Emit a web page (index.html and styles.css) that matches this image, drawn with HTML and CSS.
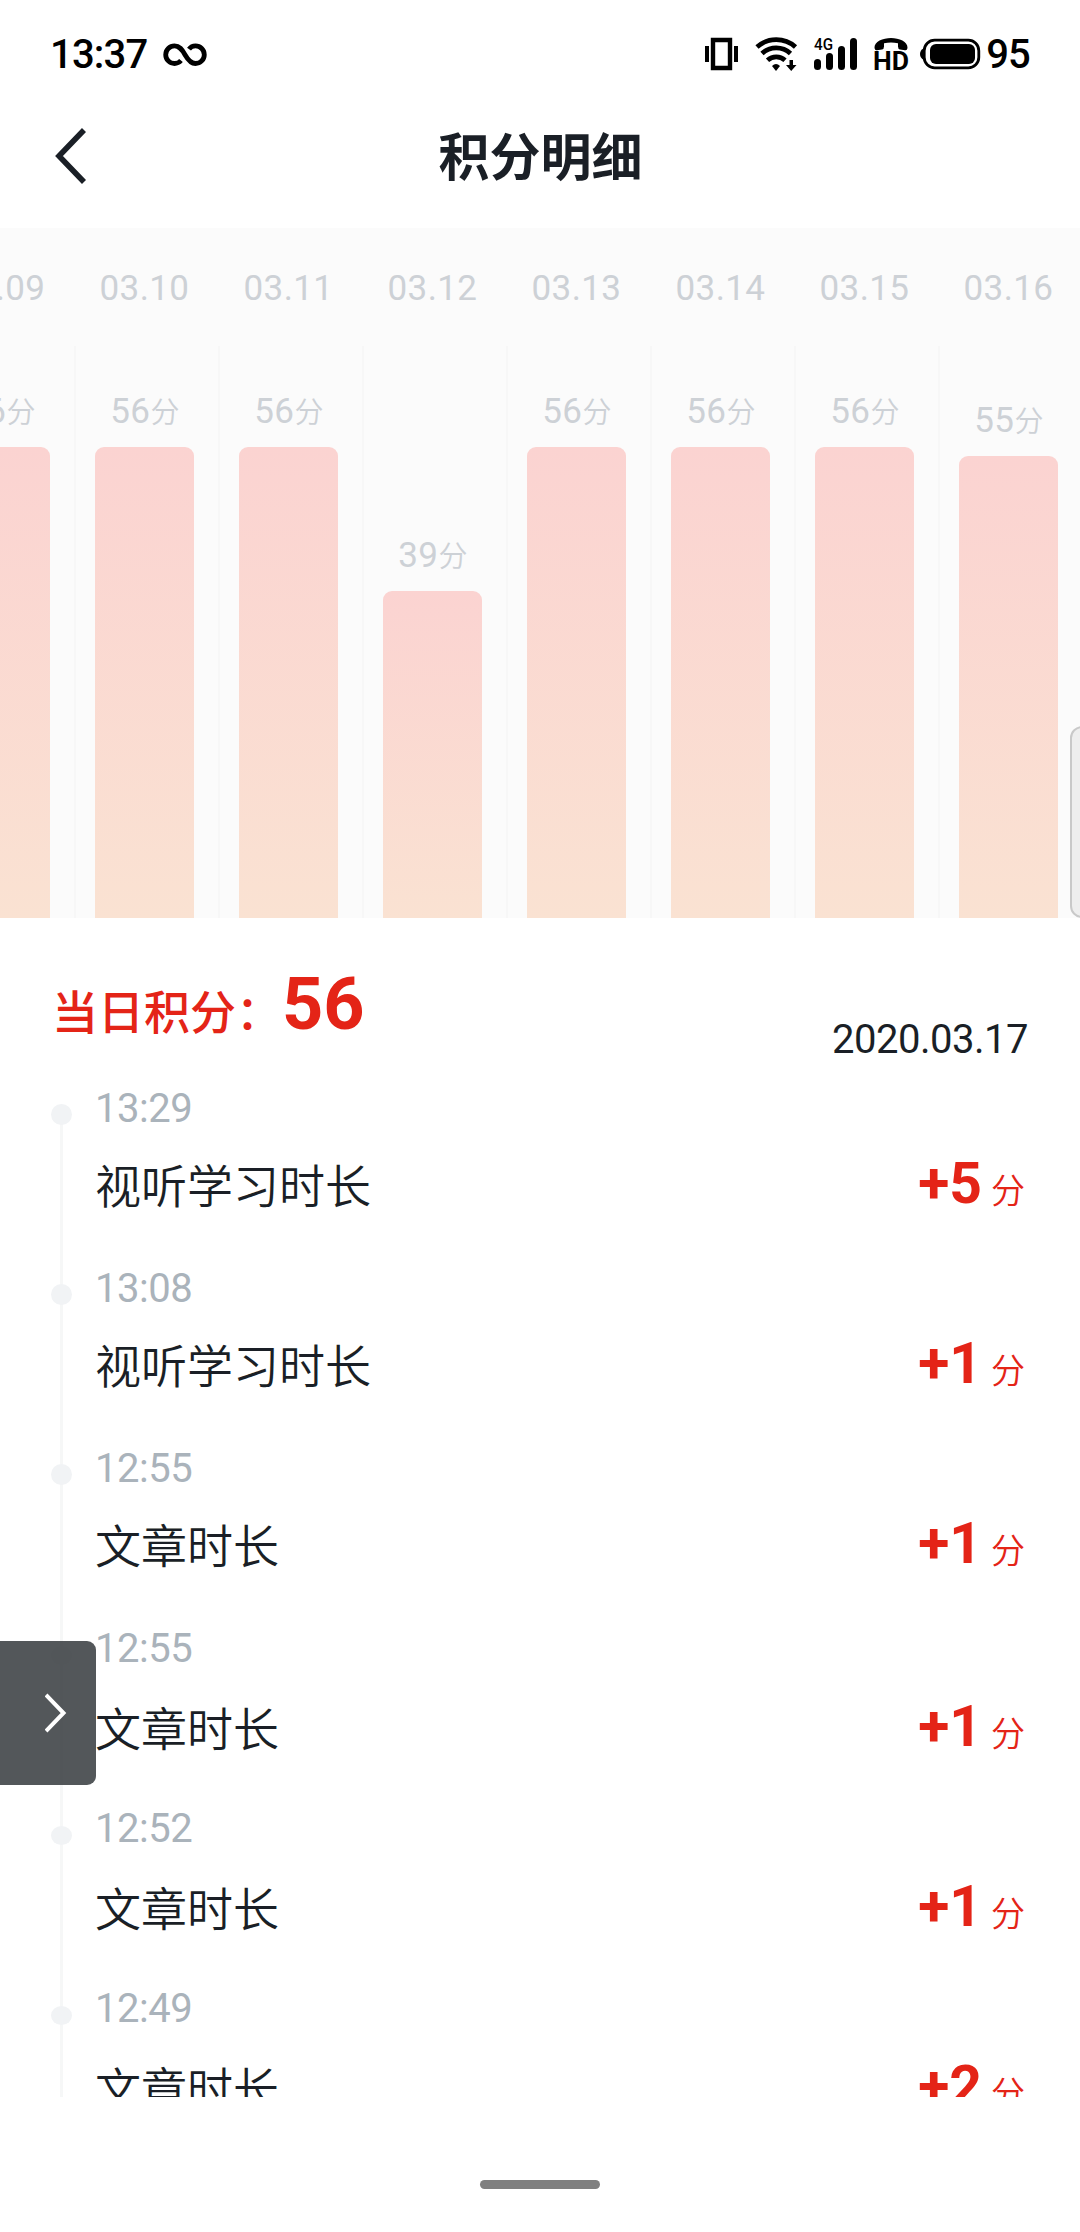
FILE: index.html
```
<!DOCTYPE html>
<html lang="zh-CN">
<head>
    <meta charset="UTF-8">
    <title>积分明细</title>
    <link rel="stylesheet" href="styles.css">
</head>
<body>
<div class="status">
    <span class="clock">13:37</span>
    <svg class="infinity" width="44" height="24" viewBox="0 0 44 24">
        <path d="M18 17.500C16 19.800 13.500 20.500 11.500 20.500a8.800 8.800 0 0 1 0-17.600c5 0 7.500 3.600 10.500 8.800s6 8.800 10.500 8.800a8.800 8.800 0 0 0 0-17.600c-3 0-5 1.200-6.500 3.300" fill="none" stroke="#000" stroke-width="4.800"/>
    </svg>
    <svg class="icons" width="278" height="40" viewBox="0 0 278 40">
        <!-- 振动 -->
        <path d="M0 10h4v16H0zM29 10h4v16h-4z"/>
        <path d="M8 4h17v28H8z" fill="none" stroke="#000" stroke-width="4.400"/>
        <!-- wifi -->
        <g fill="none" stroke="#000" stroke-width="4.800">
            <path d="M52 11a29 29 0 0 1 38.500 0"/>
            <path d="M57 17.500a21 21 0 0 1 28.500 0"/>
            <path d="M62.500 24.300a13 13 0 0 1 17.500 0"/>
        </g>
        <path d="M67 30q4-4 8 0l-4 5z"/>
        <path d="M84.500 24h3.500v5h3.500L86.200 35 81 29h3.500z"/>
        <!-- 信号 -->
        <text class="net" x="109" y="14" textLength="19" lengthAdjust="spacingAndGlyphs">4G</text>
        <rect x="109" y="23" width="7" height="11" rx="3.500"/>
        <rect x="121" y="17" width="7" height="17" rx="3.500"/>
        <rect x="133" y="10" width="7" height="24" rx="3.500"/>
        <rect x="145" y="2" width="7" height="32" rx="3.500"/>
        <!-- HD通话 -->
        <path d="M169.500 12C169 5.500 178 2 186 2s17 3.500 16.500 10q-.3 2.500-2.500 2.200l-5-.8q-2-.4-2-3V7.300q-7-1.600-14 0v3.100q0 2.600-2 3l-5 .8q-2.200.3-2.500-2.200z"/>
        <text class="hd" x="168" y="34" textLength="36" lengthAdjust="spacingAndGlyphs">HD</text>
        <!-- 电池 -->
        <path d="M219 12q-4 2-4 6t4 6z"/>
        <rect x="219.200" y="4.200" width="54.600" height="27.600" rx="10.500" fill="none" stroke="#000" stroke-width="2.800"/>
        <rect x="225" y="8" width="45" height="20" rx="6"/>
    </svg>
    <span class="power">95</span>
</div>
<div class="header">
    <svg class="back" width="32" height="58" viewBox="0 0 32 58">
        <path d="M30 3L5 29l25 26" fill="none" stroke="#1a1f26" stroke-width="5.600"/>
    </svg>
    <h1>积分明细</h1>
</div>
<div class="chart">
    <div class="day"><p class="date">03.09</p><div class="col"><p class="num">56<i>分</i></p><div class="bar" style="height: 471px"></div></div></div>
    <div class="day"><p class="date">03.10</p><div class="col"><p class="num">56<i>分</i></p><div class="bar" style="height: 471px"></div></div></div>
    <div class="day"><p class="date">03.11</p><div class="col"><p class="num">56<i>分</i></p><div class="bar" style="height: 471px"></div></div></div>
    <div class="day"><p class="date">03.12</p><div class="col"><p class="num">39<i>分</i></p><div class="bar" style="height: 327px"></div></div></div>
    <div class="day"><p class="date">03.13</p><div class="col"><p class="num">56<i>分</i></p><div class="bar" style="height: 471px"></div></div></div>
    <div class="day"><p class="date">03.14</p><div class="col"><p class="num">56<i>分</i></p><div class="bar" style="height: 471px"></div></div></div>
    <div class="day"><p class="date">03.15</p><div class="col"><p class="num">56<i>分</i></p><div class="bar" style="height: 471px"></div></div></div>
    <div class="day"><p class="date">03.16</p><div class="col"><p class="num">55<i>分</i></p><div class="bar" style="height: 462px"></div></div></div>
</div>
<div class="total">
    <p class="today">当日积分：<b>56</b></p>
    <p class="now">2020.03.17</p>
</div>
<ul class="list">
    <li>
        <p class="time">13:29</p>
        <div class="row"><span>视听学习时长</span><em><b>+5</b>分</em></div>
    </li>
    <li>
        <p class="time">13:08</p>
        <div class="row"><span>视听学习时长</span><em><b>+1</b>分</em></div>
    </li>
    <li>
        <p class="time">12:55</p>
        <div class="row"><span>文章时长</span><em><b>+1</b>分</em></div>
    </li>
    <li class="low">
        <p class="time">12:55</p>
        <div class="row"><span>文章时长</span><em><b>+1</b>分</em></div>
    </li>
    <li class="low">
        <p class="time">12:52</p>
        <div class="row"><span>文章时长</span><em><b>+1</b>分</em></div>
    </li>
    <li class="low">
        <p class="time">12:49</p>
        <div class="row"><span>文章时长</span><em><b>+2</b>分</em></div>
    </li>
</ul>
<div class="home"></div>
<div class="edge"></div>
<div class="drawer">
    <svg width="22" height="40" viewBox="0 0 22 40">
        <path d="M1 2l17.500 18L1 38" fill="none" stroke="#fff" stroke-width="4"/>
    </svg>
</div>
</body>
</html>
```
FILE: styles.css
```
* {
    margin: 0;
    padding: 0;
    box-sizing: border-box;
}

body {
    position: relative;
    width: 1080px;
    height: 2232px;
    overflow: hidden;
    background-color: #fff;
    color: #1a1f26;
    font-family: Roboto, "Noto Sans CJK SC", sans-serif;
}

i, em {
    font-style: normal;
}

.status {
    display: flex;
    height: 108px;
    padding: 0 50px;
    color: #000;
}

.clock, .power {
    font-size: 40px;
    font-weight: 500;
    line-height: 46px;
    letter-spacing: -.8px;
    margin-top: 32px;
}

.infinity {
    margin: 43px 0 0 15px;
}

.icons {
    margin: 36px 0 0 auto;
}

.net {
    font: 500 16.5px Roboto, sans-serif;
}

.hd {
    font: bold 25px Roboto, sans-serif;
}

.power {
    margin-left: 3px;
}

.header {
    display: flex;
    align-items: center;
    height: 120px;
    padding: 0 54px 24px;
}

.header h1 {
    flex: 1;
    margin-top: 5px;
    padding-right: 31px;
    text-align: center;
    font-size: 51px;
    font-weight: 700;
    line-height: 74px;
}

.chart {
    display: flex;
    height: 690px;
    margin-left: -72px;
    background-color: #fbfbfb;
    color: #cdd1d6;
}

.day {
    flex: 0 0 144px;
}

.date {
    height: 118px;
    padding: 40px 0 0 1px;
    text-align: center;
    font-size: 35px;
    line-height: 42px;
    letter-spacing: .4px;
}

.col {
    display: flex;
    flex-direction: column;
    justify-content: flex-end;
    height: 572px;
    margin-left: 2px;
    border-left: 2px solid #f7f7f7;
}

.num {
    padding-right: 2px;
    margin-bottom: 14px;
    text-align: center;
    font-size: 35px;
    line-height: 42px;
    letter-spacing: .4px;
}

.num i {
    font-size: 29px;
    font-weight: 350;
    line-height: 1;
}

.bar {
    width: 99px;
    margin-left: 19px;
    border-radius: 9px 9px 0 0;
    background-image: linear-gradient(#fbd3d1, #fae2d2);
}

.total {
    display: flex;
    justify-content: space-between;
    height: 170px;
    padding: 0 52px;
}

.today {
    padding-top: 37px;
    color: #e42417;
    font-size: 46px;
    font-weight: 500;
    line-height: 100px;
}

.today b {
    font-size: 72px;
}

.now {
    padding-top: 99px;
    font-size: 40px;
    line-height: 46px;
    letter-spacing: -.5px;
}

.list {
    height: 1009px;
    overflow: hidden;
    list-style: none;
}

.list li {
    position: relative;
    height: 180px;
    padding: 1px 55px 0 95px;
}

/* 时间轴的竖线和圆点 */
.list li::before {
    content: "";
    position: absolute;
    left: 60px;
    top: 26px;
    width: 3px;
    height: 180px;
    background-color: #f6f7f7;
}

.list li::after {
    content: "";
    position: absolute;
    left: 51px;
    top: 16px;
    width: 21px;
    height: 21px;
    border-radius: 50%;
    background-color: #f1f3f5;
}

.list .low::after {
    top: 18px;
    height: 19px;
}

.time {
    color: #aab3bb;
    font-size: 40px;
    line-height: 40px;
    letter-spacing: -.5px;
}

.row {
    display: flex;
    justify-content: space-between;
    align-items: baseline;
    height: 80px;
    margin-top: 21px;
    font-size: 46px;
    font-weight: 350;
    line-height: 68px;
}

.row em {
    color: #e42417;
    font-size: 34px;
}

.row b {
    margin-right: 9px;
    font-size: 57px;
}

.low .row {
    margin-top: 24px;
}

.home {
    width: 120px;
    height: 9px;
    margin: 83px auto 0;
    border-radius: 5px;
    background-color: #808080;
}

.edge {
    position: absolute;
    left: 1070px;
    top: 726px;
    width: 24px;
    height: 192px;
    border: 2px solid #c9c9c9;
    border-radius: 12px;
    background-color: #eee;
}

.drawer {
    position: absolute;
    left: 0;
    top: 1641px;
    display: flex;
    align-items: center;
    width: 96px;
    height: 144px;
    padding-left: 45px;
    border-radius: 0 9px 9px 0;
    background-color: rgba(58, 62, 66, .87);
}
```
